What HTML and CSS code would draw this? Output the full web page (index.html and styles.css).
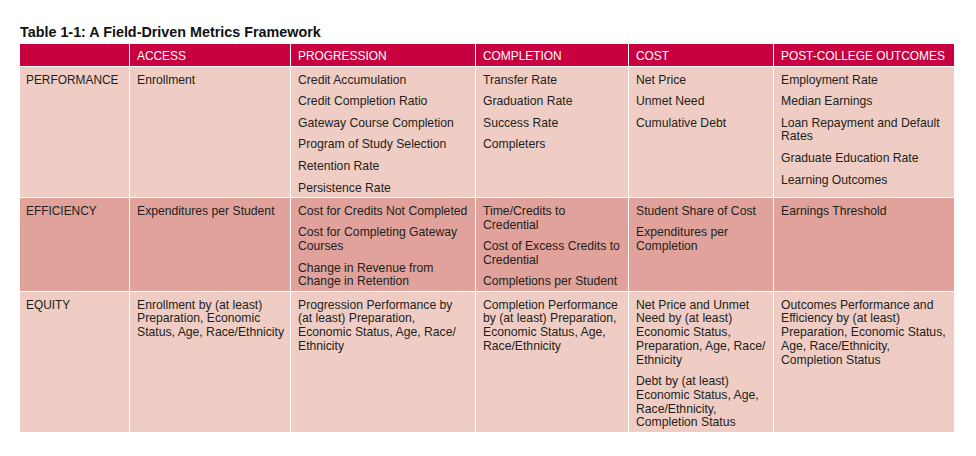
FILE: index.html
```html
<!DOCTYPE html>
<html>
<head>
<meta charset="utf-8">
<link rel="stylesheet" href="styles.css">
</head>
<body>
<div class="page">
  <h1 class="title">Table 1-1: A Field-Driven Metrics Framework</h1>
  <table class="grid">
    <colgroup>
      <col class="c1"><col class="c2"><col class="c3"><col class="c4"><col class="c5"><col class="c6">
    </colgroup>
    <thead>
      <tr class="head">
        <th></th>
        <th>ACCESS</th>
        <th>PROGRESSION</th>
        <th>COMPLETION</th>
        <th>COST</th>
        <th>POST-COLLEGE OUTCOMES</th>
      </tr>
    </thead>
    <tbody>
      <tr class="light">
        <td class="label">PERFORMANCE</td>
        <td><div class="items"><div>Enrollment</div></div></td>
        <td><div class="items">
          <div>Credit Accumulation</div>
          <div>Credit Completion Ratio</div>
          <div>Gateway Course Completion</div>
          <div>Program of Study Selection</div>
          <div>Retention Rate</div>
          <div>Persistence Rate</div>
        </div></td>
        <td><div class="items">
          <div>Transfer Rate</div>
          <div>Graduation Rate</div>
          <div>Success Rate</div>
          <div>Completers</div>
        </div></td>
        <td><div class="items">
          <div>Net Price</div>
          <div>Unmet Need</div>
          <div>Cumulative Debt</div>
        </div></td>
        <td><div class="items">
          <div>Employment Rate</div>
          <div>Median Earnings</div>
          <div>Loan Repayment and Default<br>Rates</div>
          <div>Graduate Education Rate</div>
          <div>Learning Outcomes</div>
        </div></td>
      </tr>
      <tr class="dark">
        <td class="label">EFFICIENCY</td>
        <td><div class="items"><div>Expenditures per Student</div></div></td>
        <td><div class="items">
          <div>Cost for Credits Not Completed</div>
          <div>Cost for Completing Gateway<br>Courses</div>
          <div>Change in Revenue from<br>Change in Retention</div>
        </div></td>
        <td><div class="items">
          <div>Time/Credits to<br>Credential</div>
          <div>Cost of Excess Credits to<br>Credential</div>
          <div>Completions per Student</div>
        </div></td>
        <td><div class="items">
          <div>Student Share of Cost</div>
          <div>Expenditures per<br>Completion</div>
        </div></td>
        <td><div class="items"><div>Earnings Threshold</div></div></td>
      </tr>
      <tr class="light">
        <td class="label">EQUITY</td>
        <td><div class="items"><div>Enrollment by (at least)<br>Preparation, Economic<br>Status, Age, Race/Ethnicity</div></div></td>
        <td><div class="items"><div>Progression Performance by<br>(at least) Preparation,<br>Economic Status, Age, Race/<br>Ethnicity</div></div></td>
        <td><div class="items"><div>Completion Performance<br>by (at least) Preparation,<br>Economic Status, Age,<br>Race/Ethnicity</div></div></td>
        <td><div class="items">
          <div>Net Price and Unmet<br>Need by (at least)<br>Economic Status,<br>Preparation, Age, Race/<br>Ethnicity</div>
          <div>Debt by (at least)<br>Economic Status, Age,<br>Race/Ethnicity,<br>Completion Status</div>
        </div></td>
        <td><div class="items"><div>Outcomes Performance and<br>Efficiency by (at least)<br>Preparation, Economic Status,<br>Age, Race/Ethnicity,<br>Completion Status</div></div></td>
      </tr>
    </tbody>
  </table>
</div>
</body>
</html>
```

FILE: styles.css
```css
html, body {
  margin: 0;
  padding: 0;
  background: #ffffff;
}

.page {
  padding: 23.6px 0 0 20px;
  font-family: "Liberation Sans", Arial, Helvetica, sans-serif;
  color: #231f20;
}

.title {
  margin: 0 0 3px 0;
  font-size: 14.35px;
  font-weight: bold;
  line-height: 16.4px;
  color: #111111;
}

.grid {
  margin-left: -1px;
  border-collapse: separate;
  border-spacing: 1px;
  table-layout: fixed;
  width: 936px;
}

.c1 { width: 109px; }
.c2 { width: 160px; }
.c3 { width: 184px; }
.c4 { width: 152px; }
.c5 { width: 144px; }
.c6 { width: 180px; }

.grid th,
.grid td {
  box-sizing: border-box;
  text-align: left;
  vertical-align: top;
  white-space: nowrap;
}

.head th {
  background: #c8003f;
  color: #ffffff;
  font-weight: normal;
  font-size: 11.9px;
  line-height: 13.7px;
  padding: 5.8px 6px 2.5px 7px;
  height: 22px;
}

.grid td {
  font-size: 12.2px;
  line-height: 13.7px;
  padding: 6.6px 6px 2px 7px;
}

.grid td.label {
  font-size: 11.9px;
  padding-left: 6px;
}

.light td { background: #efcdc4; }
.dark td { background: #e0a29a; }

.items {
  display: flex;
  flex-direction: column;
  gap: 7.9px;
}
```
